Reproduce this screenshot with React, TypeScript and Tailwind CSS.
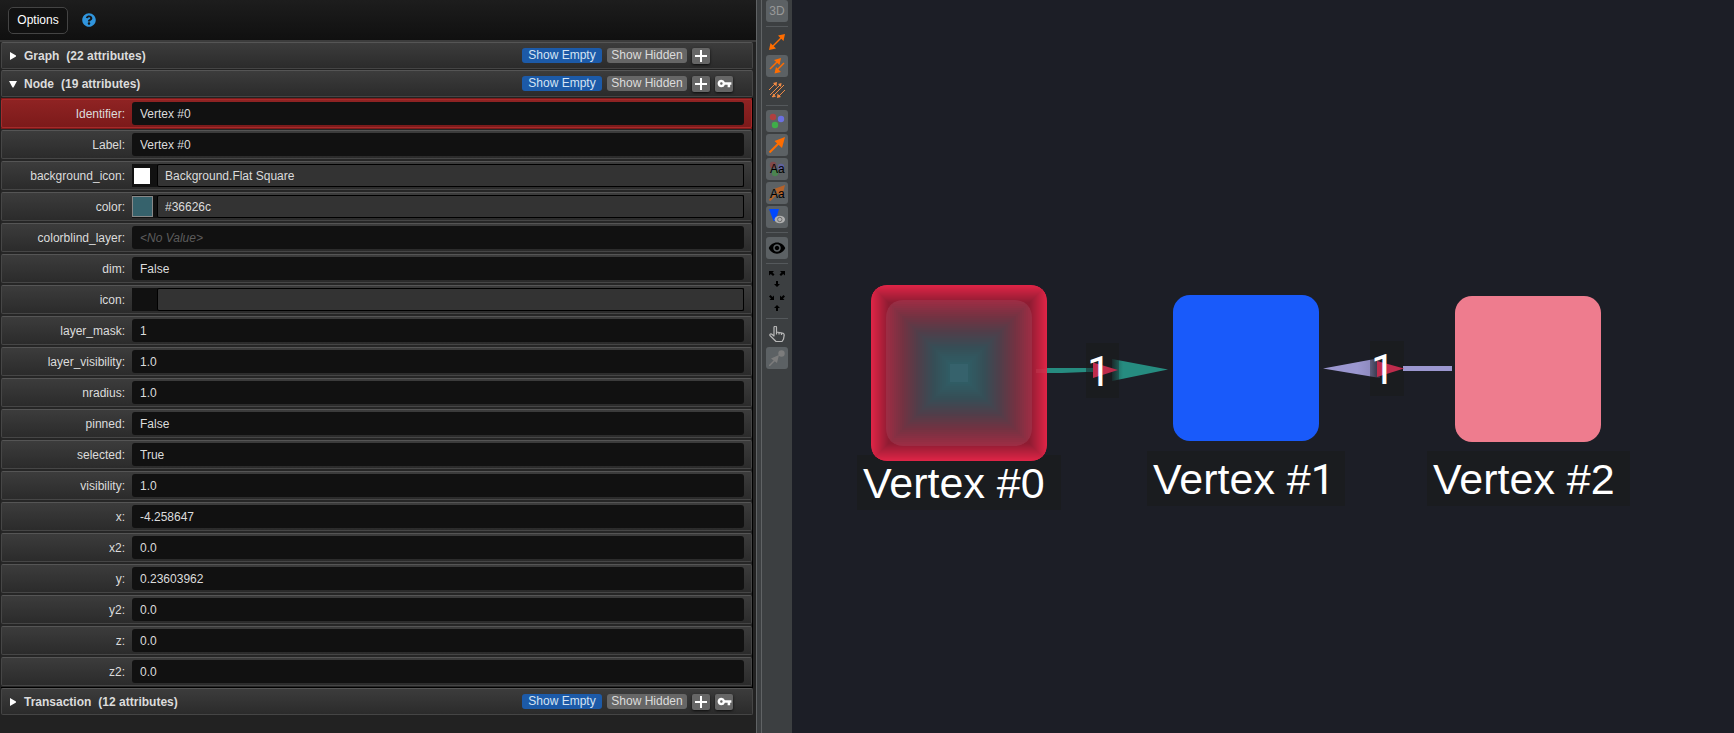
import { FaQuestionCircle } from "react-icons/fa";
import { MdVpnKey, MdRemoveRedEye } from "react-icons/md";
import type { ReactNode } from "react";

type Attribute = { name: string; value: string; swatch?: "icon" | "color" | "blank" };

const attributes: Attribute[] = [
  { name: "Identifier", value: "Vertex #0" },
  { name: "Label", value: "Vertex #0" },
  { name: "background_icon", value: "Background.Flat Square", swatch: "icon" },
  { name: "color", value: "#36626c", swatch: "color" },
  { name: "colorblind_layer", value: "" },
  { name: "dim", value: "False" },
  { name: "icon", value: "", swatch: "blank" },
  { name: "layer_mask", value: "1" },
  { name: "layer_visibility", value: "1.0" },
  { name: "nradius", value: "1.0" },
  { name: "pinned", value: "False" },
  { name: "selected", value: "True" },
  { name: "visibility", value: "1.0" },
  { name: "x", value: "-4.258647" },
  { name: "x2", value: "0.0" },
  { name: "y", value: "0.23603962" },
  { name: "y2", value: "0.0" },
  { name: "z", value: "0.0" },
  { name: "z2", value: "0.0" },
];

function Section({ title, count, open, withKey }: { title: string; count: number; open?: boolean; withKey?: boolean }) {
  return (
    <div className="h-7 pb-px">
      <div className="flex h-[27px] items-center rounded-xs border border-[#454545] border-t-[#555] bg-linear-to-b from-[#3c3c3c] to-[#2b2b2b] pl-[7px]">
        <button aria-expanded={!!open} className="flex flex-1 items-center gap-[7px] text-left font-bold text-[#dcdcdc]">
          <svg className="size-2" viewBox="0 0 8 8" fill="#fff">
            <path d={open ? "M0 1h8L4.500 7.500h-1z" : "M1 0l6 3.500v1L1 8z"} />
          </svg>
          <span className="flex gap-[7px]">
            <span>{title}</span>
            <span>({count} attributes)</span>
          </span>
        </button>
        <div className="flex w-[230px] items-center gap-[5px]">
          <button className="h-[15px] w-20 rounded-[3px] bg-[#1c5aa8] leading-[15px] text-[#d4e4f4]">Show Empty</button>
          <button className="h-[15px] w-20 rounded-[3px] bg-[#666] leading-[15px] text-[#dcdcdc]">Show Hidden</button>
          <button aria-label="Add attribute" className="flex h-4 w-[18px] items-center justify-center rounded-xs bg-[#666] shadow-sm shadow-black/60">
            <svg className="size-3" viewBox="0 0 12 12">
              <path d="M5 0h2v5h5v2H7v5H5V7H0V5h5z" fill="#fff" />
            </svg>
          </button>
          {withKey && (
            <button aria-label="Edit primary key" className="flex h-4 w-[18px] items-center justify-center rounded-xs bg-[#666] text-white shadow-sm shadow-black/60">
              <MdVpnKey size={15} />
            </button>
          )}
        </div>
      </div>
    </div>
  );
}

function Row({ a, primary }: { a: Attribute; primary: boolean }) {
  const id = `attr-${a.name}`;
  return (
    <div className={"flex h-[31px] flex-col pt-px pb-px " + (primary ? "bg-[#7c1a1a]" : "bg-[#262626]")}>
      <div
        className={
          "flex flex-1 items-center rounded-xs border pr-[7px] " +
          (primary
            ? "border-[#a52a2a] bg-linear-to-b from-[#8f2323] to-[#7c1a1a]"
            : "border-[#464646] border-t-[#555] bg-linear-to-b from-[#3c3c3c] to-[#2b2b2b]")
        }
      >
        <label htmlFor={id} className="w-[130px] shrink-0 pr-[7px] text-right text-[#dcdcdc]">
          {a.name}:
        </label>
        {a.swatch ? (
          <div className="flex h-[23px] flex-1 bg-[#111]">
            <div className="flex w-[25px] items-center">
              {a.swatch === "icon" && <span className="ml-0.5 size-4 bg-white" />}
              {a.swatch === "color" && <span className="size-[21px] border border-[#888] bg-[#36626c]" />}
            </div>
            <input id={id} defaultValue={a.value} className="min-w-0 flex-1 rounded-xs border border-black bg-[#333] px-[7px] text-[#dcdcdc] outline-none" />
          </div>
        ) : (
          <input
            id={id}
            defaultValue={a.value}
            placeholder="<No Value>"
            className="h-[23px] min-w-0 flex-1 rounded-[3px] bg-[#111] px-2 text-[#dcdcdc] outline-none placeholder:text-[#5c5c5c] placeholder:italic"
          />
        )}
      </div>
    </div>
  );
}

function Tool({ label, on, children }: { label: string; on?: boolean; children: ReactNode }) {
  return (
    <button aria-label={label} className={"flex size-[22px] items-center justify-center rounded-[3px] " + (on ? "bg-[#5c6164]" : "")}>
      {children}
    </button>
  );
}

function Icon({ children }: { children: ReactNode }) {
  return (
    <svg className="size-4" viewBox="0 0 16 16">
      {children}
    </svg>
  );
}

function ToolGroup({ children, last }: { children: ReactNode; last?: boolean }) {
  return <div className={"flex flex-col gap-0.5 " + (last ? "" : "mb-1 border-b border-[#55595c] pb-1")}>{children}</div>;
}

function Toolbar() {
  const orange = "#ff6d00";
  return (
    <div className="flex w-[30px] shrink-0 flex-col bg-[#3c3f41] px-1">
      <ToolGroup>
        <Tool label="Toggle 3D" on>
          <span className="text-xs text-[#999]">3D</span>
        </Tool>
      </ToolGroup>
      <ToolGroup>
        <Tool label="Draw edges">
          <Icon>
            <path d="M3 13L13 3" stroke={orange} strokeWidth="1.500" />
            <path d="M16 0l-1.500 7L9 1.500zM0 16l1.500-7L7 14.500z" fill={orange} />
          </Icon>
        </Tool>
        <Tool label="Draw directed edges" on>
          <Icon>
            <path d="M1 11L9 3M15 5l-8 8" stroke={orange} strokeWidth="1.500" />
            <path d="M12 0l-1.500 7L5 2zM5.500 15.500L7 9l5 5z" fill={orange} />
          </Icon>
        </Tool>
        <Tool label="Draw all edges">
          <Icon>
            <path d="M0 8l7-7M1 13L12 2M3 15L15 3M9 15l7-7" stroke="#f08a45" strokeWidth="1" />
            <path d="M8 0l-.5 4.500L4 1zM12.500 1L12 5 9 2zM3.500 15.500l.5-4 3 3zM8 16l.5-4.500L12 15z" fill="#f08a45" />
          </Icon>
        </Tool>
      </ToolGroup>
      <ToolGroup>
        <Tool label="Show nodes" on>
          <Icon>
            <circle cx="4" cy="4" r="3.200" fill="#b04040" />
            <circle cx="12" cy="6" r="3.200" fill="#6b70e0" />
            <circle cx="6" cy="12" r="3.200" fill="#3fae49" />
          </Icon>
        </Tool>
        <Tool label="Show connections" on>
          <Icon>
            <path d="M.5 15.500L11 5" stroke={orange} strokeWidth="2" />
            <path d="M16 0l-3 11L5.500 4z" fill={orange} />
          </Icon>
        </Tool>
        <Tool label="Show node labels" on>
          <Icon>
            <circle cx="4" cy="4" r="3.200" fill="#80494b" />
            <circle cx="12" cy="6" r="3.200" fill="#5f629e" />
            <circle cx="6" cy="12" r="3.200" fill="#4b8551" />
            <text x="1" y="12" fontSize="12" fill="#000" className="font-['Liberation_Sans']">Aa</text>
          </Icon>
        </Tool>
        <Tool label="Show connection labels" on>
          <Icon>
            <path d="M.5 15.500L11 5" stroke="#b5622a" strokeWidth="2" />
            <path d="M16 0l-3 12L5 4z" fill="#b5622a" />
            <text x="1" y="13" fontSize="12" fill="#000" className="font-['Liberation_Sans']">Aa</text>
          </Icon>
        </Tool>
        <Tool label="Show blazes" on>
          <Icon>
            <path d="M0 0h10L6.500 12h-2z" fill="#0048ff" />
            <ellipse cx="10.800" cy="10.500" rx="5.200" ry="3.800" fill="#b0b0b0" />
            <circle cx="10.800" cy="10.500" r="2.200" fill="none" stroke="#6c6c6c" strokeWidth="1" />
          </Icon>
        </Tool>
      </ToolGroup>
      <ToolGroup>
        <Tool label="Visible above threshold" on>
          <MdRemoveRedEye size={18} color="#000" />
        </Tool>
      </ToolGroup>
      <ToolGroup>
        <Tool label="Expand composites">
          <Icon>
            <path d="M0 0h5L3.500 1.500l2 2-1.500 1.500-2.200-2L0 4.500zM16 0h-5l1.500 1.500-2 2L12 5l2.200-2L16 4.500zM7 10h2v3h2l-3 3-3-3h2z" fill="#000" />
          </Icon>
        </Tool>
        <Tool label="Contract composites">
          <Icon>
            <path d="M5 5H.5L2 3.500 0 1.500 1.500 0l2 2L5 .5zM11 5h4.500L14 3.500l2-2L14.500 0l-2 2L11 .5zM7 16h2v-3h2l-3-3-3 3h2z" fill="#000" />
          </Icon>
        </Tool>
      </ToolGroup>
      <ToolGroup last>
        <Tool label="Select mode">
          <svg className="size-4" viewBox="0 0 16 16" fill="none" stroke="#b8b8b8" strokeWidth="1.200" strokeLinejoin="round">
            <path d="M5 10V1.500a1.200 1.200 0 0 1 2.500 0V6l6 1.200a1.800 1.800 0 0 1 1.700 2l-.7 4-1.500 2.300H7L1 9.500a1.100 1.100 0 0 1 1.500-1.500zM7.500 6v2.500M10 6.500v2M12.500 7v2" />
          </svg>
        </Tool>
        <Tool label="Directed transactions" on>
          <Icon>
            <path d="M0 16l8-8" stroke="#7c7c7c" strokeWidth="1.500" />
            <path d="M10 5L2 8.500 8 13z" fill="#7c7c7c" />
            <circle cx="12.500" cy="3.500" r="3.200" fill="#7c7c7c" />
          </Icon>
        </Tool>
      </ToolGroup>
    </div>
  );
}

function mix(a: number[], b: number[], t: number) {
  return `rgb(${a.map((v, i) => Math.round(v + (b[i] - v) * t)).join(",")})`;
}

const coreStops = [
  [156, 45, 68],
  [116, 50, 66],
  [80, 62, 74],
  [54, 78, 86],
  [48, 92, 100],
];

function coreColor(t: number) {
  const p = Math.min(t * 4, 3.999);
  const k = Math.floor(p);
  return mix(coreStops[k], coreStops[k + 1], p - k);
}

const glow = Array.from({ length: 18 }, (_, i) => i);
const core = Array.from({ length: 32 }, (_, i) => i);

function SelectedNode() {
  return (
    <svg className="absolute top-[285px] left-[79px] size-44" viewBox="0 0 176 176">
      <defs>
        <clipPath id="outer"><rect width="176" height="176" rx="16" /></clipPath>
        <clipPath id="inner"><rect x="15" y="15" width="146" height="146" rx="17" /></clipPath>
      </defs>
      <g clipPath="url(#outer)">
        {glow.map((i) => (
          <rect key={i} x={i} y={i} width={176 - i * 2} height={176 - i * 2} fill={mix([222, 36, 70], [142, 28, 50], i / 17)} />
        ))}
      </g>
      <g clipPath="url(#inner)">
        {core.map((i) => (
          <rect key={i} x={15 + i * 2} y={15 + i * 2} width={146 - i * 4} height={146 - i * 4} fill={coreColor(i / 31)} />
        ))}
        <rect x="79" y="79" width="18" height="18" fill="#36626c" />
      </g>
    </svg>
  );
}

function Graph() {
  const plate = "absolute h-[55px] bg-[#1a1c1f]";
  const caption = plate + " pl-1.5 text-[43px] leading-[56px] whitespace-nowrap text-white";
  const weight = "absolute font-['Roboto',sans-serif] text-[43px] leading-[56px] text-white";
  return (
    <main className="relative min-w-0 flex-1 overflow-hidden bg-[#1c1e26]">
      <div className={caption + " top-[455px] left-[65px] w-[204px]"}>Vertex #0</div>
      <SelectedNode />
      <div className="absolute top-[295px] left-[381px] size-[146px] rounded-[17px] bg-[#195afa]" />
      <div className={caption + " top-[451px] left-[355px] w-[198px]"}>
        Vertex #<span className="font-['Roboto',sans-serif]">1</span>
      </div>
      <div className="absolute top-[296px] left-[663px] size-[146px] rounded-[17px] bg-[#ee7c8e]" />
      <div className={caption + " top-[451px] left-[635px] w-[203px]"}>Vertex #2</div>
      <div className={plate + " top-[343px] left-[294px] w-[33px]"} />
      <div className={plate + " top-[341px] left-[578px] w-[34px]"} />
      <svg className="absolute top-[350px] left-[244px] h-10 w-[420px]" viewBox="244 350 420 40">
        <defs>
          <linearGradient id="teal">
            <stop stopColor="#1b2b2c" />
            <stop offset="0.125" stopColor="#1e5a54" />
            <stop offset="0.125" stopColor="#237a70" />
            <stop offset="0.2" stopColor="#268c80" />
          </linearGradient>
          <linearGradient id="violet">
            <stop offset="0.6" stopColor="#9b97d0" />
            <stop offset="0.82" stopColor="#8f8bc0" />
            <stop offset="0.82" stopColor="#5f5e7e" />
            <stop offset="1" stopColor="#2d2d3c" />
          </linearGradient>
        </defs>
        <path d="M244 369h11v4h-11z" fill="#c43f55" opacity="0.4" />
        <path d="M255 368h39v4l-24 1h-15z" fill="#268c80" />
        <path d="M294 368h8v4h-8z" fill="#1d504d" />
        <path d="M320 359l56 10.500L320 381z" fill="url(#teal)" />
        <path d="M301 362.500l25 7.500-25 8z" fill="#be2c4c" />
        <path d="M531 368.500L588 358v20z" fill="url(#violet)" />
        <path d="M611 366h49v5h-49z" fill="#9b97d0" />
        <path d="M585 361l27 7.500-27 8.500z" fill="#be2c4c" />
      </svg>
      <div className={weight + " top-[343px] left-[295px]"}>1</div>
      <div className={weight + " top-[341px] left-[579px]"}>1</div>
    </main>
  );
}

export default function App() {
  return (
    <div className="flex min-h-screen bg-[#1c1e26] font-['Liberation_Sans',Arial,sans-serif] text-xs">
      <aside className="flex min-w-[600px] basis-[756px] flex-col bg-[#222]">
        <header className="flex h-10 items-center gap-3.5 bg-linear-to-b from-[#1d1d1d] to-[#101010] pl-2">
          <button className="h-[27px] w-[60px] rounded-[5px] border border-[#444] bg-[#111] text-white">Options</button>
          <button aria-label="Help" className="text-[#3095dd]"><FaQuestionCircle size={14} /></button>
        </header>
        <div className="flex flex-col border-t-2 border-[#3c3c3c] pr-[3px] pl-px">
          <Section title="Graph" count={22} />
          <Section title="Node" count={19} open withKey />
          <div className="bg-black pr-px pb-px">
            {attributes.map((a, i) => <Row key={a.name} a={a} primary={i === 0} />)}
          </div>
          <Section title="Transaction" count={12} withKey />
        </div>
      </aside>
      <div className="w-1.5 shrink-0 border-x border-[#606365] bg-[#3c3f41]" />
      <Toolbar />
      <Graph />
    </div>
  );
}
